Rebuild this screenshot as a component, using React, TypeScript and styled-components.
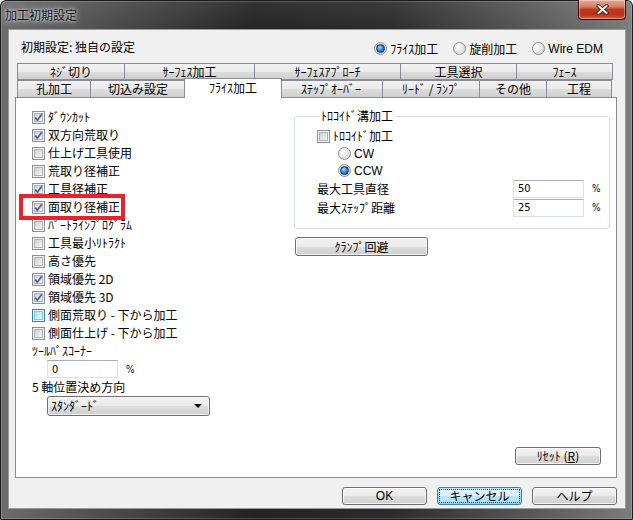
import React from 'react'
import styled, { createGlobalStyle, css } from 'styled-components'

const GlobalStyle = createGlobalStyle`
  html, body {
    margin: 0;
    padding: 0;
    background: #ffffff;
  }
  body {
    font-family: "Noto Sans CJK JP", "Noto Sans", sans-serif;
    font-size: 12px;
    color: #000;
  }
  * { box-sizing: border-box; }
`

const Window = styled.div`
  width: 633px;
  height: 520px;
  display: flex;
  flex-direction: column;
  padding: 0 6px 10px 7px;
  border: 1px solid #1b1b1b;
  border-radius: 6px 6px 0 0;
  background:
    linear-gradient(to bottom, rgba(255,255,255,0.08), rgba(0,0,0,0) 30px),
    linear-gradient(to right, #6c6c6c 0%, #4a4a4a 18%, #232323 40%, #2c2c2c 62%, #5a5a5a 85%, #7c7c7c 100%);
  box-shadow: inset 0 0 0 1px rgba(255,255,255,0.18);
`

const TitleBar = styled.div`
  height: 28px;
  display: flex;
  align-items: flex-start;
`

const Title = styled.div`
  padding-top: 6px;
  margin-left: -3px;
  font-size: 12px;
  line-height: 16px;
  color: #151515;
  text-shadow: 0 0 6px rgba(255,255,255,0.9), 0 0 3px rgba(255,255,255,0.8);
`

const CloseButton = styled.div`
  margin-left: auto;
  margin-top: -1px;
  width: 48px;
  height: 20px;
  border: 1px solid #3b0d06;
  border-top: none;
  border-radius: 0 0 4px 4px;
  background: linear-gradient(to bottom, #e6a796 0%, #d77d66 35%, #c1381e 50%, #b8311a 75%, #d6603f 100%);
  box-shadow: inset 0 0 0 1px rgba(255,255,255,0.35);
  display: flex;
  align-items: center;
  justify-content: center;
`

const Client = styled.div`
  flex: 1;
  display: flex;
  flex-direction: column;
  background: #f0f0f0;
  border: 1px solid #9a9a9a;
  padding: 0 8px 0 6px;
`

const Header = styled.div`
  height: 33px;
  display: flex;
  align-items: center;
  padding: 0 14px 0 6px;
`

const Label = styled.span<{ $latin?: boolean }>`
  line-height: 16px;
  white-space: nowrap;
  ${p => p.$latin && css`
    font-family: "Liberation Sans", "DejaVu Sans", sans-serif;
    font-size: 12px;
  `}
`

const RadioGroup = styled.div`
  margin-left: auto;
  display: flex;
  align-items: center;
  gap: 15px;
  padding-top: 4px;
`

const RadioItem = styled.label`
  display: flex;
  align-items: center;
  gap: 3px;
`

const RadioCircle = styled.span<{ $on?: boolean }>`
  width: 13px;
  height: 13px;
  border-radius: 50%;
  border: 1px solid #8e8f8f;
  background: radial-gradient(circle at 35% 35%, #ffffff 0%, #e8e8e8 45%, #c9c9c9 100%);
  display: flex;
  align-items: center;
  justify-content: center;
  flex-shrink: 0;
  &::after {
    content: '';
    display: ${p => (p.$on ? 'block' : 'none')};
    width: 7px;
    height: 7px;
    border-radius: 50%;
    border: 1px solid #0d2f61;
    background: radial-gradient(circle at 40% 35%, #a8e2ff 0%, #3b8fd9 40%, #0f4e9e 100%);
  }
`

const TabRow = styled.div`
  height: 17px;
  display: flex;
  padding-left: 2px;
`

const Tab = styled.div<{ $w: number; $active?: boolean; $bottom?: boolean }>`
  width: ${p => p.$w}px;
  height: 17px;
  flex-shrink: 0;
  border: 1px solid #898c95;
  border-left-width: 0;
  ${p => !p.$bottom && css`border-bottom: none;`}
  &:first-child { border-left-width: 1px; }
  background: linear-gradient(to bottom, #f2f2f2 0%, #ebebeb 50%, #dddddd 51%, #cfcfcf 100%);
  display: flex;
  align-items: center;
  justify-content: center;
  line-height: 14px;
  white-space: nowrap;
  ${p => p.$active && css`
    position: relative;
    z-index: 1;
    height: 20px;
    margin: -2px -2px 0 -2px;
    width: ${p.$w + 3}px;
    border-left-width: 1px;
    border-bottom: none;
    background: #ffffff;
    padding-bottom: 2px;
  `}
`

const Panel = styled.div`
  height: 381px;
  width: 602px;
  background: #ffffff;
  border: 1px solid #898c95;
  display: flex;
  flex-direction: column;
  padding: 10px 15px 12px 16px;
`

const Columns = styled.div`
  display: flex;
`

const LeftColumn = styled.div`
  width: 262px;
  flex-shrink: 0;
  display: flex;
  flex-direction: column;
`

const RightColumn = styled.div`
  width: 312px;
  flex-shrink: 0;
  display: flex;
  flex-direction: column;
  padding-top: 1px;
`

const CheckRow = styled.div<{ $h?: number }>`
  height: ${p => p.$h ?? 18}px;
  display: flex;
  align-items: center;
  gap: 3px;
`

const Box = styled.span<{ $hover?: boolean }>`
  width: 13px;
  height: 13px;
  flex-shrink: 0;
  border: 1px solid #8e8f8f;
  background: #f4f4f4;
  display: flex;
  align-items: center;
  justify-content: center;
  & > i {
    position: relative;
    display: block;
    width: 9px;
    height: 9px;
    border: 1px solid #aeb3b9;
    background: linear-gradient(135deg, #cbcfd5 0%, #e4e6ea 60%, #f6f6f6 100%);
  }
  & > i > svg {
    position: absolute;
    left: -1px;
    top: -1px;
    display: block;
  }
  ${p => p.$hover && css`
    border-color: #3c7fb1;
    & > i {
      border-color: #79c6f9;
      background: linear-gradient(135deg, #b1dffd 0%, #d5effc 60%, #ecf8fe 100%);
    }
  `}
`

const FieldLabel = styled.div`
  height: 18px;
  display: flex;
  align-items: center;
  line-height: 16px;
`

const InputRow = styled.div<{ $indent?: number }>`
  display: flex;
  align-items: center;
  gap: 8px;
  padding-left: ${p => p.$indent ?? 0}px;
`

const TextBox = styled.div<{ $w: number }>`
  width: ${p => p.$w}px;
  height: 18px;
  background: #fff;
  border: 1px solid #dbdfe6;
  border-top-color: #abadb3;
  padding: 0 4px;
  display: flex;
  align-items: center;
  font-family: "DejaVu Sans Condensed", "DejaVu Sans", sans-serif;
  font-size: 11px;
`

const Percent = styled.span`
  font-family: "DejaVu Sans Condensed", "DejaVu Sans", sans-serif;
  font-size: 10px;
`

const Select = styled.div`
  margin-left: 15px;
  width: 163px;
  height: 20px;
  border: 1px solid #707070;
  border-radius: 3px;
  background: linear-gradient(to bottom, #f2f2f2 0%, #ebebeb 50%, #dddddd 51%, #cfcfcf 100%);
  box-shadow: inset 0 0 0 1px rgba(255,255,255,0.7);
  display: flex;
  align-items: center;
  padding: 0 7px 0 3px;
  justify-content: space-between;
`

const Arrow = styled.span`
  width: 0;
  height: 0;
  border-left: 4px solid transparent;
  border-right: 4px solid transparent;
  border-top: 4px solid #000;
`

const GroupBox = styled.fieldset`
  margin: 0;
  height: 120px;
  border: 1px solid #d5dfe5;
  border-radius: 3px;
  padding: 4px 8px 7px 22px;
  display: flex;
  flex-direction: column;
`

const Legend = styled.legend`
  padding: 0 2px 0 1px;
  margin-left: 3px;
  line-height: 14px;
`

const RadioRow = styled.div`
  height: 17px;
  display: flex;
  align-items: center;
  gap: 3px;
  padding-left: 21px;
`

const ValueRow = styled.div`
  height: 19px;
  display: flex;
  align-items: center;
`

const ValueLabel = styled.span`
  width: 196px;
  line-height: 16px;
`

const Button = styled.div<{ $w: number; $focus?: boolean; $h?: number }>`
  width: ${p => p.$w}px;
  height: ${p => p.$h ?? 18}px;
  border: 1px solid #707070;
  border-radius: 3px;
  background: linear-gradient(to bottom, #f2f2f2 0%, #ebebeb 50%, #dddddd 51%, #cfcfcf 100%);
  box-shadow: inset 0 0 0 1px rgba(255,255,255,0.75);
  display: flex;
  align-items: center;
  justify-content: center;
  line-height: 14px;
  white-space: nowrap;
  flex-shrink: 0;
  ${p => p.$focus && css`
    border-color: #3c7fb1;
    background: linear-gradient(to bottom, #eaf6fd 0%, #d9f0fc 50%, #bee6fd 51%, #a7d9f5 100%);
    box-shadow: inset 0 0 0 1px #48d1ff55;
    outline: 1px dotted #6b3030;
    outline-offset: -3px;
  `}
`

const ClampButton = styled(Button)`
  margin-top: 8px;
  margin-left: 1px;
`

const PanelFooter = styled.div`
  margin-top: auto;
  display: flex;
  justify-content: flex-end;
  padding-right: 0;
`

const Footer = styled.div`
  margin-top: 9px;
  display: flex;
  justify-content: flex-end;
  gap: 10px;
`

const Ul = styled.span`
  text-decoration: underline;
`

const Highlight = styled.div`
  display: flex;
  flex-direction: column;
  justify-content: center;
  margin: -4px 0 -4px -13px;
  padding-left: 9px;
  width: 106px;
  height: 26px;
  border: 4px solid #e8232c;
  position: relative;
  z-index: 1;
`

const CheckBox = ({ on, hover }: { on?: boolean; hover?: boolean }) => (
  <Box $hover={hover}>
    <i>
      {on && (
        <svg width="9" height="9" viewBox="0 0 9 9">
          <path d="M1.2 4.6 L3.4 7.2 L7.8 1.2" fill="none" stroke="#4a5f97" strokeWidth="1.7" />
        </svg>
      )}
    </i>
  </Box>
)

const options: Array<[string, boolean, boolean?]> = [
  ['ﾀﾞｳﾝｶｯﾄ', true],
  ['双方向荒取り', true],
  ['仕上げ工具使用', false],
  ['荒取り径補正', false],
  ['工具径補正', true],
  ['面取り径補正', true],
  ['ﾊﾟｰﾄﾗｲﾝﾌﾟﾛｸﾞﾗﾑ', false],
  ['工具最小ﾘﾄﾗｸﾄ', false],
  ['高さ優先', false],
  ['領域優先 2D', true],
  ['領域優先 3D', true],
  ['側面荒取り - 下から加工', false, true],
  ['側面仕上げ - 下から加工', false],
]

const topTabs: Array<[string, number]> = [
  ['ﾈｼﾞ切り', 108],
  ['ｻｰﾌｪｽ加工', 130],
  ['ｻｰﾌｪｽｱﾌﾟﾛｰﾁ', 146],
  ['工具選択', 116],
  ['ﾌｪｰｽ', 96],
]

const bottomTabs: Array<[string, number, boolean?]> = [
  ['孔加工', 74],
  ['切込み設定', 95],
  ['ﾌﾗｲｽ加工', 95, true],
  ['ｽﾃｯﾌﾟｵｰﾊﾞｰ', 103],
  ['ﾘｰﾄﾞ / ﾗﾝﾌﾟ', 97],
  ['その他', 67],
  ['工程', 65],
]

const App = () => {
  return (
    <>
      <GlobalStyle />
      <Window>
        <TitleBar>
          <Title>加工初期設定</Title>
          <CloseButton>
            <svg width="13" height="11" viewBox="0 0 13 11">
              <path d="M2.5 2 L10.5 9 M10.5 2 L2.5 9" stroke="#3a1410" strokeWidth="3.6" strokeLinecap="square" />
              <path d="M2.5 2 L10.5 9 M10.5 2 L2.5 9" stroke="#ffffff" strokeWidth="2" strokeLinecap="square" />
            </svg>
          </CloseButton>
        </TitleBar>
        <Client>
          <Header>
            <Label>初期設定: 独自の設定</Label>
            <RadioGroup>
              <RadioItem><RadioCircle $on /><Label>ﾌﾗｲｽ加工</Label></RadioItem>
              <RadioItem><RadioCircle /><Label>旋削加工</Label></RadioItem>
              <RadioItem><RadioCircle /><Label $latin>Wire EDM</Label></RadioItem>
            </RadioGroup>
          </Header>

          <TabRow>
            {topTabs.map(([t, w]) => (
              <Tab key={t} $w={w} $bottom>{t}</Tab>
            ))}
          </TabRow>
          <TabRow>
            {bottomTabs.map(([t, w, a]) => (
              <Tab key={t} $w={w} $active={a}>{t}</Tab>
            ))}
          </TabRow>

          <Panel>
            <Columns>
              <LeftColumn>
                {options.map(([t, on, hover]) =>
                  t === '面取り径補正' ? (
                    <CheckRow key={t}>
                      <Highlight>
                        <CheckRow>
                          <CheckBox on={on} />
                          <Label>{t}</Label>
                        </CheckRow>
                      </Highlight>
                    </CheckRow>
                  ) : (
                    <CheckRow key={t}>
                      <CheckBox on={on} hover={hover} />
                      <Label>{t}</Label>
                    </CheckRow>
                  )
                )}
                <FieldLabel>ﾂｰﾙﾊﾟｽｺｰﾅｰ</FieldLabel>
                <InputRow $indent={15}>
                  <TextBox $w={71}>0</TextBox>
                  <Percent>%</Percent>
                </InputRow>
                <FieldLabel>5 軸位置決め方向</FieldLabel>
                <Select>
                  <Label>ｽﾀﾝﾀﾞｰﾄﾞ</Label>
                  <Arrow />
                </Select>
              </LeftColumn>

              <RightColumn>
                <GroupBox>
                  <Legend>ﾄﾛｺｲﾄﾞ溝加工</Legend>
                  <CheckRow>
                    <CheckBox />
                    <Label>ﾄﾛｺｲﾄﾞ加工</Label>
                  </CheckRow>
                  <RadioRow>
                    <RadioCircle />
                    <Label $latin>CW</Label>
                  </RadioRow>
                  <RadioRow>
                    <RadioCircle $on />
                    <Label $latin>CCW</Label>
                  </RadioRow>
                  <ValueRow>
                    <ValueLabel>最大工具直径</ValueLabel>
                    <InputRow>
                      <TextBox $w={71}>50</TextBox>
                      <Percent>%</Percent>
                    </InputRow>
                  </ValueRow>
                  <ValueRow>
                    <ValueLabel>最大ｽﾃｯﾌﾟ距離</ValueLabel>
                    <InputRow>
                      <TextBox $w={71}>25</TextBox>
                      <Percent>%</Percent>
                    </InputRow>
                  </ValueRow>
                </GroupBox>
                <ClampButton $w={133} $h={19}>ｸﾗﾝﾌﾟ回避</ClampButton>
              </RightColumn>
            </Columns>
            <PanelFooter>
              <Button $w={86}>ﾘｾｯﾄ (<Ul>R</Ul>)</Button>
            </PanelFooter>
          </Panel>

          <Footer>
            <Button $w={85}><Label $latin>OK</Label></Button>
            <Button $w={85} $focus>キャンセル</Button>
            <Button $w={85}>ヘルプ</Button>
          </Footer>
        </Client>
      </Window>
    </>
  )
}

export default App
